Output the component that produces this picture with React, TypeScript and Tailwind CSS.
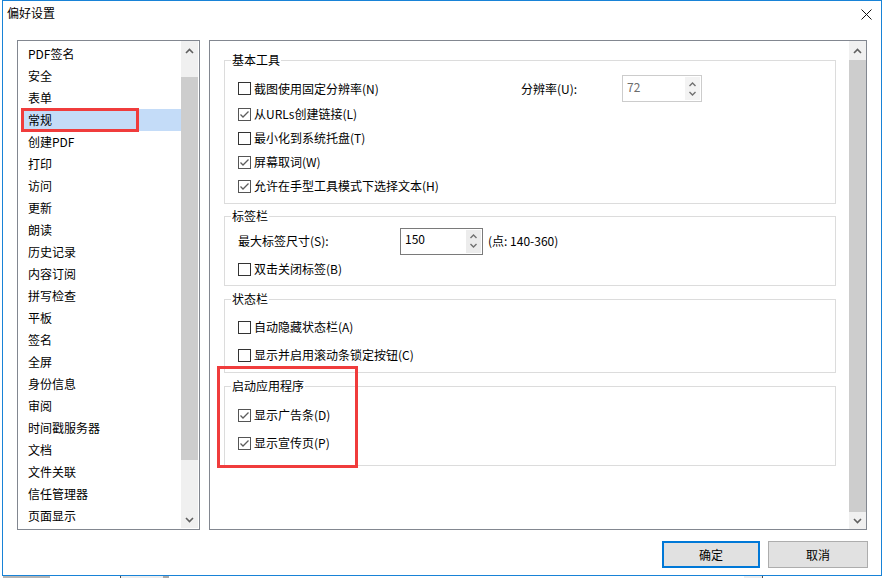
import React from 'react';

const navItems = [
  'PDF签名', '安全', '表单', '常规', '创建PDF', '打印', '访问', '更新', '朗读', '历史记录', '内容订阅',
  '拼写检查', '平板', '签名', '全屏', '身份信息', '审阅', '时间戳服务器', '文档', '文件关联', '信任管理器', '页面显示',
];

const Chevron = ({ dir }: { dir: 'up' | 'down' }) => (
  <svg width="9" height="6" viewBox="0 0 9 6" className="block">
    <polyline
      points={dir === 'up' ? '1,5 4.5,1.5 8,5' : '1,1 4.5,4.5 8,1'}
      fill="none"
      stroke="#606060"
      strokeWidth="1.6"
    />
  </svg>
);

const SmallChevron = ({ dir }: { dir: 'up' | 'down' }) => (
  <svg width="9" height="6" viewBox="0 0 9 6" className="block">
    <polyline
      points={dir === 'up' ? '1.5,5 4.5,2 7.5,5' : '1.5,1 4.5,4 7.5,1'}
      fill="none"
      stroke="#707070"
      strokeWidth="1.4"
    />
  </svg>
);

const CheckBox = ({ checked }: { checked?: boolean }) => (
  <span
    className={`flex h-[13px] w-[13px] shrink-0 items-center justify-center border bg-white ${
      checked ? 'border-[#555555]' : 'border-[#333333]'
    }`}
  >
    {checked && (
      <svg width="11" height="11" viewBox="0 0 11 11" className="block">
        <polyline points="1.5,5.5 4,8 9.5,2.5" fill="none" stroke="#5c5c5c" strokeWidth="1.3" />
      </svg>
    )}
  </span>
);

const Check = ({ label, checked, className = 'h-[24px]' }: { label: string; checked?: boolean; className?: string }) => (
  <label className={`flex items-center gap-[3px] ${className}`}>
    <CheckBox checked={checked} />
    <span>{label}</span>
  </label>
);

const SpinBox = ({ value, disabled, className }: { value: string; disabled?: boolean; className: string }) => (
  <div
    className={`flex h-[27px] border bg-white ${className} ${
      disabled ? 'border-[#cccccc] text-[#6d6d6d]' : 'border-[#7a7a7a] text-black'
    }`}
  >
    <div className={`flex-1 pl-[4px] ${disabled ? 'pt-[2px]' : 'pt-[1px]'}`}>{value}</div>
    <div className={`my-[1px] mr-[1px] flex w-[15px] flex-col items-center justify-center gap-[4px] ${disabled ? 'bg-[#f3f3f3]' : 'bg-[#ececec]'}`}>
      <SmallChevron dir="up" />
      <SmallChevron dir="down" />
    </div>
  </div>
);

const Group = ({ title, className, children }: { title: string; className: string; children: React.ReactNode }) => (
  <fieldset className={`border border-[#dcdcdc] ${className}`}>
    <legend className="ml-[6px] px-[1px] leading-[16px]">{title}</legend>
    <div className="pl-[13px]">{children}</div>
  </fieldset>
);

export default function App() {
  return (
    <div className="h-[578px] w-[884px] overflow-hidden bg-white font-['Microsoft_YaHei','Noto_Sans_CJK_SC',sans-serif] text-[12px] text-black">
      <div className="ml-[2px] flex h-[576px] w-[880px] flex-col border border-[#1883d7] bg-white">
        {/* title bar */}
        <div className="flex h-[24px] items-center justify-between pl-[4px] pr-[9px]">
          <span className="leading-[16px]">偏好设置</span>
          <svg width="11" height="11" viewBox="0 0 11 11" className="mt-[2px] block">
            <path d="M0.5 0.5 L10.5 10.5 M10.5 0.5 L0.5 10.5" stroke="#111" strokeWidth="1" />
          </svg>
        </div>

        <div className="mt-[15px] flex gap-[9px] pl-[14px]">
          {/* category list */}
          <div className="flex h-[490px] w-[183px] border border-[#828790] p-[1px] pt-0">
            <div className="flex-1 pl-[2px] pt-[2px]">
              {navItems.map((item) => (
                <div
                  key={item}
                  className={`relative h-[22px] pl-[7px] leading-[22px] ${item === '常规' ? 'bg-[#c4dcf8]' : ''}`}
                >
                  {item}
                  {item === '常规' && (
                    <span className="pointer-events-none absolute left-0 top-[-1px] h-[24px] w-[118px] border-[3px] border-[#f03c3c]" />
                  )}
                </div>
              ))}
            </div>
            <div className="flex w-[17px] flex-col bg-[#f0f0f0]">
              <div className="flex h-[17px] items-center justify-center pt-[2px]">
                <Chevron dir="up" />
              </div>
              <div className="h-[19px]" />
              <div className="h-[383px] bg-[#cdcdcd]" />
              <div className="flex-1" />
              <div className="flex h-[17px] items-center justify-center">
                <Chevron dir="down" />
              </div>
            </div>
          </div>

          {/* settings panel */}
          <div className="flex h-[490px] w-[658px] border border-[#828790]">
            <div className="relative flex-1 pl-[14px] pr-[13px] pt-[11px]">
              <Group title="基本工具" className="h-[152px]">
                <div className="pt-[7px]">
                  <div className="flex h-[27px] items-center">
                    <Check label="截图使用固定分辨率(N)" className="h-[27px] w-[283px]" />
                    <span className="w-[101px]">分辨率(U):</span>
                    <SpinBox value="72" disabled className="w-[80px]" />
                  </div>
                  <Check label="从URLs创建链接(L)" checked />
                  <Check label="最小化到系统托盘(T)" />
                  <Check label="屏幕取词(W)" checked />
                  <Check label="允许在手型工具模式下选择文本(H)" checked />
                </div>
              </Group>

              <Group title="标签栏" className="mt-[4px] h-[78px]">
                <div className="pt-[3px]">
                  <div className="flex h-[28px] items-center">
                    <span className="w-[162px]">最大标签尺寸(S):</span>
                    <SpinBox value="150" className="w-[83px]" />
                    <span className="pl-[5px]">(点: 140-360)</span>
                  </div>
                  <Check label="双击关闭标签(B)" className="h-[28px]" />
                </div>
              </Group>

              <Group title="状态栏" className="mt-[5px] h-[82px]">
                <div className="pt-[6px]">
                  <Check label="自动隐藏状态栏(A)" className="h-[28px]" />
                  <Check label="显示并启用滚动条锁定按钮(C)" className="h-[28px]" />
                </div>
              </Group>

              <Group title="启动应用程序" className="mt-[5px] h-[88px]">
                <div className="pt-[7px]">
                  <Check label="显示广告条(D)" checked className="h-[28px]" />
                  <Check label="显示宣传页(P)" checked className="h-[28px]" />
                </div>
              </Group>

              <span className="pointer-events-none absolute left-[7px] top-[325px] h-[102px] w-[141px] border-[3px] border-[#f03c3c]" />
            </div>
            <div className="flex w-[17px] flex-col bg-[#f0f0f0]">
              <div className="flex h-[19px] items-center justify-center">
                <Chevron dir="up" />
              </div>
              <div className="h-[452px] bg-[#cdcdcd]" />
              <div className="flex flex-1 items-center justify-center">
                <Chevron dir="down" />
              </div>
            </div>
          </div>
        </div>

        {/* buttons */}
        <div className="mt-[11px] flex justify-end gap-[8px] pr-[13px]">
          <button className="h-[27px] w-[98px] border-2 border-[#0078d7] bg-[#e1e1e1] leading-[23px]">确定</button>
          <button className="h-[27px] w-[100px] border border-[#adadad] bg-[#e1e1e1] leading-[25px]">取消</button>
        </div>
      </div>

      {/* desktop peeking below */}
      <div className="flex h-[2px]">
        <div className="ml-[3px] w-[47px] bg-[#b4b4b4]" />
        <div className="w-[70px]" />
        <div className="w-[1px] bg-[#505050]" />
        <div className="w-[42px] bg-[#ededed]" />
        <div className="w-[6px] bg-[#a8a8a8]" />
        <div className="w-[575px]" />
        <div className="w-[18px] bg-[#ededed]" />
        <div className="w-[1px] bg-[#505050]" />
      </div>
    </div>
  );
}
